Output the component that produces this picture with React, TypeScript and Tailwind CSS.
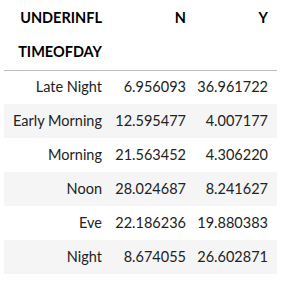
export default function App() {
  const rows: [string, string, string][] = [
    ["Late Night", "6.956093", "36.961722"],
    ["Early Morning", "12.595477", "4.007177"],
    ["Morning", "21.563452", "4.306220"],
    ["Noon", "28.024687", "8.241627"],
    ["Eve", "22.186236", "19.880383"],
    ["Night", "8.674055", "26.602871"],
  ];

  return (
    <div className="w-[286px] h-[281px] bg-white pl-[4px] font-['Segoe_UI','Lato',sans-serif] text-[14.5px] text-[#222]">
      <table className="border-collapse w-[273px] table-fixed">
        <colgroup>
          <col className="w-[107px]" />
          <col className="w-[84px]" />
          <col className="w-[82px]" />
        </colgroup>
        <thead>
          <tr className="h-[35px]">
            <th className="text-right font-bold pr-[9px] text-black">UNDERINFL</th>
            <th className="text-right font-bold pr-[9px] text-black">N</th>
            <th className="text-right font-bold pr-[9px] text-black">Y</th>
          </tr>
          <tr className="h-[35px] border-b border-[#bdbdbd]">
            <th className="text-right font-bold pr-[9px] text-black">TIMEOFDAY</th>
            <th />
            <th />
          </tr>
        </thead>
        <tbody>
          {rows.map((r, i) => (
            <tr key={r[0]} className={i % 2 === 1 ? "h-[34px] bg-[#f5f5f5]" : "h-[34px]"}>
              <td className="text-right pr-[9px] whitespace-nowrap">{r[0]}</td>
              <td className="text-right pr-[9px]">{r[1]}</td>
              <td className="text-right pr-[9px]">{r[2]}</td>
            </tr>
          ))}
        </tbody>
      </table>
    </div>
  );
}
